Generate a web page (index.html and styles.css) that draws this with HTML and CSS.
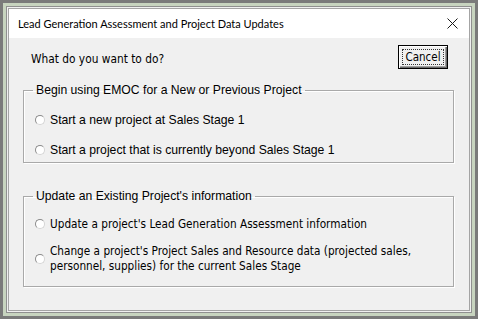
FILE: index.html
```html
<!DOCTYPE html>
<html lang="en">
<head>
    <meta charset="UTF-8">
    <title>Lead Generation Assessment and Project Data Updates</title>
    <link rel="stylesheet" href="styles.css">
</head>
<body>
    <div class="frame">
        <div class="win">
            <div class="titlebar">
                <span class="title">Lead Generation Assessment and Project Data Updates</span>
                <svg class="close" width="11" height="11" viewBox="0 0 11 11">
                    <path d="M0.5 0.5L10.5 10.5M10.5 0.5L0.5 10.5" stroke="#1a1a1a" stroke-width="1" fill="none"/>
                </svg>
            </div>
            <div class="client">
                <div class="toprow">
                    <span class="prompt">What do you want to do?</span>
                    <button class="btn"><span>Cancel</span></button>
                </div>

                <fieldset class="group">
                    <legend>Begin using EMOC for a New or Previous Project</legend>
                    <label class="opt arial"><span class="radio"></span>Start a new project at Sales Stage 1</label>
                    <label class="opt arial"><span class="radio"></span>Start a project that is currently beyond Sales Stage 1</label>
                </fieldset>

                <fieldset class="group group2">
                    <legend>Update an Existing Project's information</legend>
                    <label class="opt tahoma"><span class="radio"></span>Update a project's Lead Generation Assessment information</label>
                    <label class="opt tahoma two"><span class="radio"></span><span>Change a project's Project Sales and Resource data (projected sales,<br>personnel, supplies) for the current Sales Stage</span></label>
                </fieldset>
            </div>
        </div>
    </div>
</body>
</html>
```
FILE: styles.css
```css
*{
    margin: 0;
    padding: 0;
    box-sizing: border-box;
}
html, body{
    width: 478px;
    height: 319px;
    overflow: hidden;
}
body{
    background: #7a7a7a;
    padding: 3px;
}
.frame{
    height: 100%;
    border: 3px solid #c7d4bf;
    background: #c7d4bf;
}
.win{
    height: 100%;
    border: 1px solid #8f8f8f;
    outline: 1px solid #a4a4a4;
    outline-offset: -3px;
    background: #f0f0f0;
    display: flex;
    flex-direction: column;
    padding: 2px;
}
.titlebar{
    height: 29px;
    background: #ffffff;
    display: flex;
    align-items: center;
    justify-content: space-between;
    padding: 0 11px 0 9px;
    font-family: "Lato", sans-serif;
    font-size: 11px;
    color: #000;
}
.client{
    flex: 1;
    background: #f0f0f0;
    padding: 7px 10px 0 14px;
}
.toprow{
    display: flex;
    justify-content: space-between;
    align-items: flex-start;
    padding-left: 8px;
    height: 38px;
}
.prompt{
    font-family: "DejaVu Sans Condensed", "DejaVu Sans", sans-serif;
    font-size: 11.8px;
    margin-top: 7px;
}
.btn{
    width: 50px;
    height: 24px;
    margin-right: 11px;
    border: 1px solid #000;
    background: #f0f0f0;
    box-shadow: inset 1px 1px #fff, inset -1px -1px #696969, inset -2px -2px #a0a0a0;
    font-family: "DejaVu Sans Condensed", "DejaVu Sans", sans-serif;
    font-size: 11.5px;
    padding: 3px;
}
.btn span{
    display: block;
    height: 100%;
    border: 1px dotted #333;
    line-height: 14px;
}
.group{
    border: 1px solid #a9a9a9;
    box-shadow: 1px 1px #fff, inset 1px 1px #fff;
    margin-right: 5px;
    padding: 8px 0 0 11px;
    height: 80px;
}
.group2{
    margin-top: 26px;
    height: 98px;
    padding-top: 6px;
}
.group legend{
    font-family: "Liberation Sans", sans-serif;
    font-size: 12.2px;
    color: #000;
    margin-left: -2px;
    padding: 0 3px;
}
.opt{
    display: flex;
    align-items: center;
    height: 30px;
    color: #000;
}
.arial{
    font-family: "Liberation Sans", sans-serif;
    font-size: 12.2px;
}
.tahoma{
    font-family: "DejaVu Sans Condensed", "DejaVu Sans", sans-serif;
    font-size: 11.7px;
}
.two{
    height: 40px;
    line-height: 15px;
}
.radio{
    flex: none;
    width: 10px;
    height: 10px;
    border-radius: 50%;
    background: #fff;
    border: 1px solid #d4d4d4;
    border-top-color: #8a8a8a;
    border-left-color: #8a8a8a;
    margin-right: 5px;
}
```
